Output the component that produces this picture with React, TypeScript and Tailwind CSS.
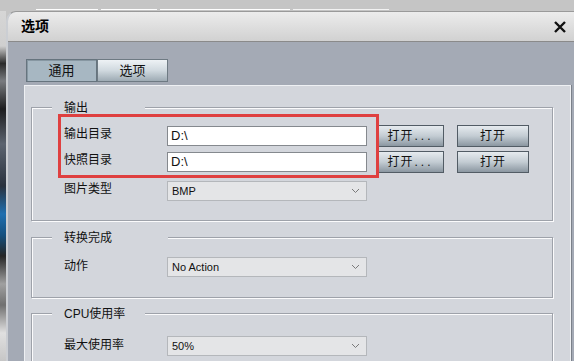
import React from 'react';

const Chevron: React.FC = () => (
  <svg width="9" height="6" viewBox="0 0 9 6" fill="none">
    <path d="M1 1 L4.5 4.5 L8 1" stroke="#7a7a7a" strokeWidth="1" />
  </svg>
);

const Select: React.FC<{ value: string }> = ({ value }) => (
  <div className="w-[200px] h-[20px] bg-[#e4e5e7] border border-[#b4b7bb] flex items-center justify-between pl-[4px] pr-[6px] text-[11px] text-[#111]">
    <span>{value}</span>
    <Chevron />
  </div>
);

const TextBox: React.FC<{ value: string }> = ({ value }) => (
  <div className="w-[200px] h-[20px] bg-white border border-[#85898e] flex items-center pl-[3px] text-[13px] text-[#111]">
    {value}
  </div>
);

const Btn: React.FC<{ label: string; dots?: boolean; w: string }> = ({ label, dots, w }) => (
  <button
    className={`${w} h-[22px] border border-[#525c65] bg-gradient-to-b from-[#e6ebef] via-[#c3ccd3] to-[#8b97a1] text-[12px] text-[#111] flex items-center justify-center`}
  >
    <span className="tracking-[1px]">{label}</span>
    {dots && <span className="tracking-[3px] ml-[1px]">...</span>}
  </button>
);

const Group: React.FC<{
  title: string;
  titleW: string;
  className: string;
  children: React.ReactNode;
}> = ({ title, titleW, className, children }) => (
  <div
    className={`relative w-[522px] border border-[#9ea2aa] shadow-[1px_1px_0_#fbfbfc,inset_1px_1px_0_#fbfbfc] pl-[32px] ${className}`}
  >
    <span
      className={`absolute -top-[8px] left-[20px] ${titleW} h-[16px] leading-[16px] bg-[#d3d6dc] pl-[12px] text-[12px] text-[#111]`}
    >
      {title}
    </span>
    {children}
  </div>
);

const App: React.FC = () => {
  return (
    <div className="w-[574px] h-[361px] overflow-hidden bg-[#c5c5c5] flex flex-col font-['Liberation_Sans','Noto_Sans_CJK_SC',sans-serif]">
      {/* window behind the dialog */}
      <div className="h-[11px] shrink-0 flex items-end pb-[1px]">
        <div className="ml-[36px] w-[62px] h-[1px] bg-white" />
        <div className="ml-[3px] w-[56px] h-[1px] bg-white" />
        <div className="ml-[3px] w-[130px] h-[1px] bg-white" />
        <div className="ml-[3px] w-[96px] h-[1px] bg-[#f2f2f2]" />
      </div>

      <div className="flex flex-1 min-h-0">
        <div className="w-[6px] shrink-0 bg-[linear-gradient(to_bottom,#d6d6d6_0%,#cfcfcf_10%,#2b2b2b_15%,#7a7c80_20%,#1c1c1e_28%,#5c6470_38%,#2a323e_50%,#1f6fb0_58%,#14507f_64%,#262626_70%,#a0a0a0_78%,#707070_84%,#e0e0e0_92%,#c6c6c6_100%)]" />

        {/* dialog */}
        <div className="flex-1 flex flex-col bg-[#a4aab5] border-l-2 border-t border-l-[#cbced3] border-t-[#9a9a9a] rounded-tl-[10px] overflow-hidden">
          <div className="h-[30px] shrink-0 border-b border-[#8a8a8a] bg-gradient-to-b from-[#ececec] to-[#d1d1d1] flex items-center justify-between pl-[13px] pr-[7px]">
            <span className="text-[14px] font-bold text-black">选项</span>
            <svg width="14" height="12" viewBox="0 0 14 12">
              <path d="M2 1 L12 11 M12 1 L2 11" stroke="#111" strokeWidth="2.4" />
            </svg>
          </div>

          <div className="flex-1 flex flex-col pl-[16px] pt-[17px] min-h-0">
            <div className="flex ml-[2px] h-[23px] shrink-0">
              <div className="w-[71px] h-full bg-[#a7b7c2] border border-[#66747e] shadow-[inset_1px_1px_0_#8797a2] flex items-center justify-center text-[13px] text-[#111]">
                通用
              </div>
              <div className="w-[71px] h-full bg-gradient-to-b from-[#eef2f5] via-[#d0d9df] to-[#9eabb4] border border-[#6e7a83] flex items-center justify-center text-[13px] text-[#111]">
                选项
              </div>
            </div>

            <div className="flex-1 mt-[3px] mr-[3px] bg-[#d3d6dc] border-t border-l border-r border-[#eef0f3] shadow-[1px_0_0_#7b818a] pl-[6px] pt-[21px]">
              <Group title="输出" titleW="w-[93px]" className="h-[114px] pt-[17px]">
                <div className="flex items-center h-[22px]">
                  <span className="w-[103px] text-[12px] text-[#111] mb-[4px]">输出目录</span>
                  <TextBox value="D:\" />
                  <div className="ml-[10px]">
                    <Btn label="打开" dots w="w-[67px]" />
                  </div>
                  <div className="ml-[13px]">
                    <Btn label="打开" w="w-[72px]" />
                  </div>
                </div>
                <div className="flex items-center h-[22px] mt-[4px]">
                  <span className="w-[103px] text-[12px] text-[#111] mb-[4px]">快照目录</span>
                  <TextBox value="D:\" />
                  <div className="ml-[10px]">
                    <Btn label="打开" dots w="w-[67px]" />
                  </div>
                  <div className="ml-[13px]">
                    <Btn label="打开" w="w-[72px]" />
                  </div>
                </div>
                <div className="flex items-center h-[20px] mt-[8px]">
                  <span className="w-[103px] text-[12px] text-[#111] mb-[4px]">图片类型</span>
                  <Select value="BMP" />
                </div>

                <div className="absolute left-[26px] top-[6px] w-[321px] h-[64px] border-[3px] border-[#df4040] pointer-events-none" />
              </Group>

              <Group title="转换完成" titleW="w-[116px]" className="h-[61px] pt-[19px] mt-[16px]">
                <div className="flex items-center h-[20px]">
                  <span className="w-[103px] text-[12px] text-[#111] mb-[2px]">动作</span>
                  <Select value="No Action" />
                </div>
              </Group>

              <Group title="CPU使用率" titleW="w-[93px]" className="h-[80px] pt-[22px] mt-[15px]">
                <div className="flex items-center h-[20px]">
                  <span className="w-[103px] text-[12px] text-[#111] mb-[2px]">最大使用率</span>
                  <Select value="50%" />
                </div>
              </Group>
            </div>
          </div>
        </div>
      </div>
    </div>
  );
};

export default App;
